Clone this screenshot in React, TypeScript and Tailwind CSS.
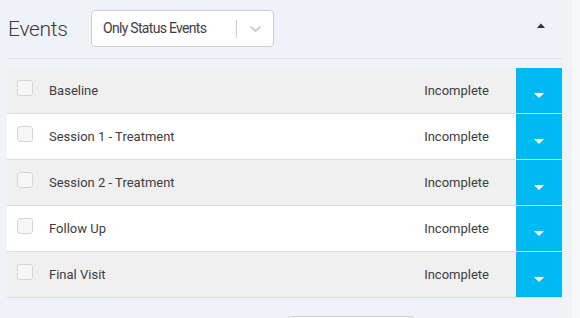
import React from "react";

const rows = [
  { name: "Baseline", gray: true },
  { name: "Session 1 - Treatment", gray: false },
  { name: "Session 2 - Treatment", gray: true },
  { name: "Follow Up", gray: false },
  { name: "Final Visit", gray: true },
];

export default function App() {
  return (
    <div
      className="w-[580px] h-[318px] overflow-hidden flex bg-[#eff2f6]"
      style={{ fontFamily: "Roboto, 'Liberation Sans', sans-serif" }}
    >
      <div className="w-[572px] flex flex-col pl-[7px] pr-[10px]">
        <div className="shrink-0 flex items-start pt-[10px] h-[59px] border-b border-[#dcdfe3]">
          <div className="text-[21px] leading-none font-light text-[#3a3a3a] tracking-[-0.3px] pt-[9px] pl-[1px] w-[84px]">
            Events
          </div>
          <div className="w-[183px] h-[37px] bg-white border border-[#cfcfcf] rounded-[4px] flex items-center">
            <div className="flex-1 pl-[11px] text-[14px] text-[#3d3d3d] tracking-[-0.7px]">
              Only Status Events
            </div>
            <div className="w-px h-[18px] bg-[#cccccc]" />
            <div className="w-[36px] flex items-center justify-center">
              <svg width="13" height="8" viewBox="0 0 13 8">
                <path d="M1.5 1.5 L6.5 6 L11.5 1.5" fill="none" stroke="#cccccc" strokeWidth="2" />
              </svg>
            </div>
          </div>
          <div className="flex-1 flex justify-end pr-[17px] pt-[13px]">
            <svg width="8" height="5" viewBox="0 0 8 5">
              <path d="M0 5 L4 0.5 L8 5 Z" fill="#333" />
            </svg>
          </div>
        </div>
        <div className="shrink-0 mt-[9px] flex flex-col">
          {rows.map((r) => (
            <div
              key={r.name}
              className={`shrink-0 h-[46px] flex border-b border-[#dcdcdc] ${r.gray ? "bg-[#f0f0f0]" : "bg-white"}`}
            >
              <div className="pl-[10px] pt-[12px]">
                <div className="w-[16px] h-[16px] rounded-[3px] border border-[#cdd8dd] bg-[#f7f7f7]" />
              </div>
              <div className="flex-1 flex items-center pl-[16px] text-[13px] text-[#3d3d3d]">
                {r.name}
              </div>
              <div className="flex items-center pr-[27px] text-[13px] text-[#3d3d3d]">
                Incomplete
              </div>
              <div className="w-[46px] bg-[#00b9f2] flex justify-center pt-[25px]">
                <svg width="10" height="5" viewBox="0 0 10 5">
                  <path d="M0 0 L10 0 L5 5 Z" fill="#ffffff" />
                </svg>
              </div>
            </div>
          ))}
        </div>
        <div className="shrink-0 mt-[18px] ml-[280px] w-[128px] h-[10px] bg-white border border-[#cccccc] rounded-[4px]" />
      </div>
      <div className="flex-1 bg-[#f6f8fa]" />
    </div>
  );
}
